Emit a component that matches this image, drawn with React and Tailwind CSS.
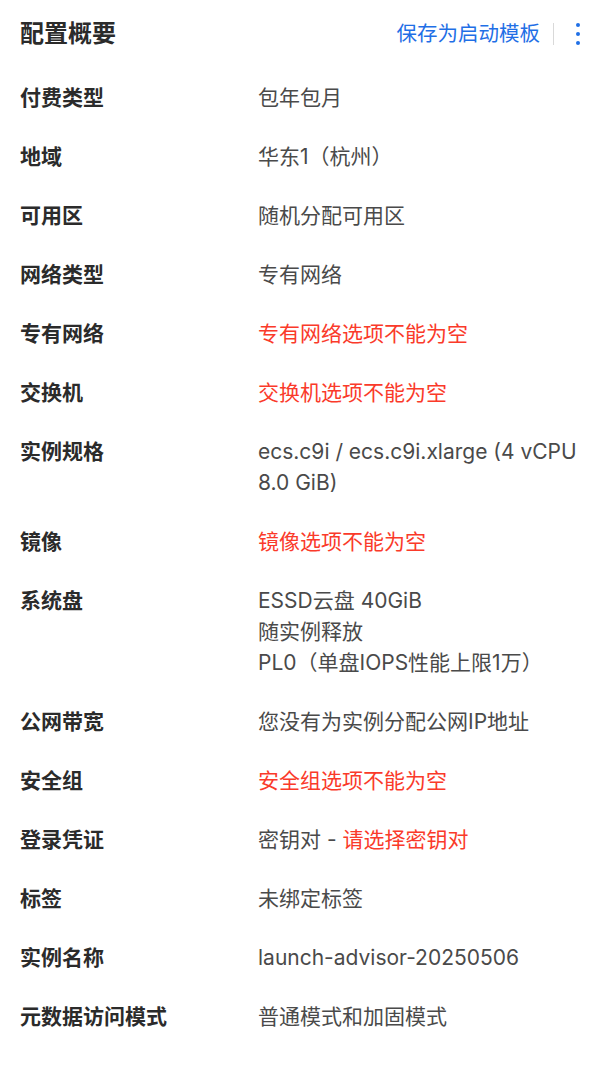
import React from 'react';

const rows = [
    { label: '付费类型', value: ['包年包月'] },
    { label: '地域', value: ['华东1（杭州）'] },
    { label: '可用区', value: ['随机分配可用区'] },
    { label: '网络类型', value: ['专有网络'] },
    { label: '专有网络', value: ['专有网络选项不能为空'], error: true },
    { label: '交换机', value: ['交换机选项不能为空'], error: true },
    { label: '实例规格', value: ['ecs.c9i / ecs.c9i.xlarge (4 vCPU', '8.0 GiB)'] },
    { label: '镜像', value: ['镜像选项不能为空'], error: true },
    { label: '系统盘', value: ['ESSD云盘 40GiB', '随实例释放', 'PL0（单盘IOPS性能上限1万）'] },
    { label: '公网带宽', value: ['您没有为实例分配公网IP地址'] },
    { label: '安全组', value: ['安全组选项不能为空'], error: true },
    { label: '登录凭证', key: 'login' },
    { label: '标签', value: ['未绑定标签'] },
    { label: '实例名称', value: ['launch-advisor-20250506'] },
    { label: '元数据访问模式', value: ['普通模式和加固模式'] },
];

function App() {
    return (
        <div
            className="min-h-screen bg-white px-5 text-[21px]"
            style={{ fontFamily: 'Inter, "Noto Sans CJK SC", sans-serif' }}
        >
            {/* header */}
            <div className="flex h-[68px] items-center">
                <h1 className="flex-1 text-[24px] font-semibold text-[#2b2b2b]">配置概要</h1>
                <a className="text-[20.5px] text-[#1f6fe6] cursor-pointer">保存为启动模板</a>
                <span className="ml-[13px] h-[22px] w-px bg-[#d9d9d9]" />
                <button className="ml-[21px] mr-[-1px] flex flex-col gap-[5px] px-[1px]">
                    <span className="h-[4px] w-[4px] rounded-full bg-[#1f6fe6]" />
                    <span className="h-[4px] w-[4px] rounded-full bg-[#1f6fe6]" />
                    <span className="h-[4px] w-[4px] rounded-full bg-[#1f6fe6]" />
                </button>
            </div>

            {/* rows */}
            <div>
                {rows.map((row) => (
                    <div key={row.label} className="grid grid-cols-[238px_1fr] py-[14px] leading-[31px]">
                        <div className="font-semibold text-[#2b2b2b]">{row.label}</div>
                        <div className={row.error ? 'text-[#fa3a2a]' : 'text-[#4a4a4a]'}>
                            {row.key === 'login' ? (
                                <span>
                                    密钥对 - <span className="text-[#fa3a2a]">请选择密钥对</span>
                                </span>
                            ) : (
                                row.value.map((line) => (
                                    <div key={line} className="whitespace-nowrap">{line}</div>
                                ))
                            )}
                        </div>
                    </div>
                ))}
            </div>
        </div>
    );
}

export default App;
